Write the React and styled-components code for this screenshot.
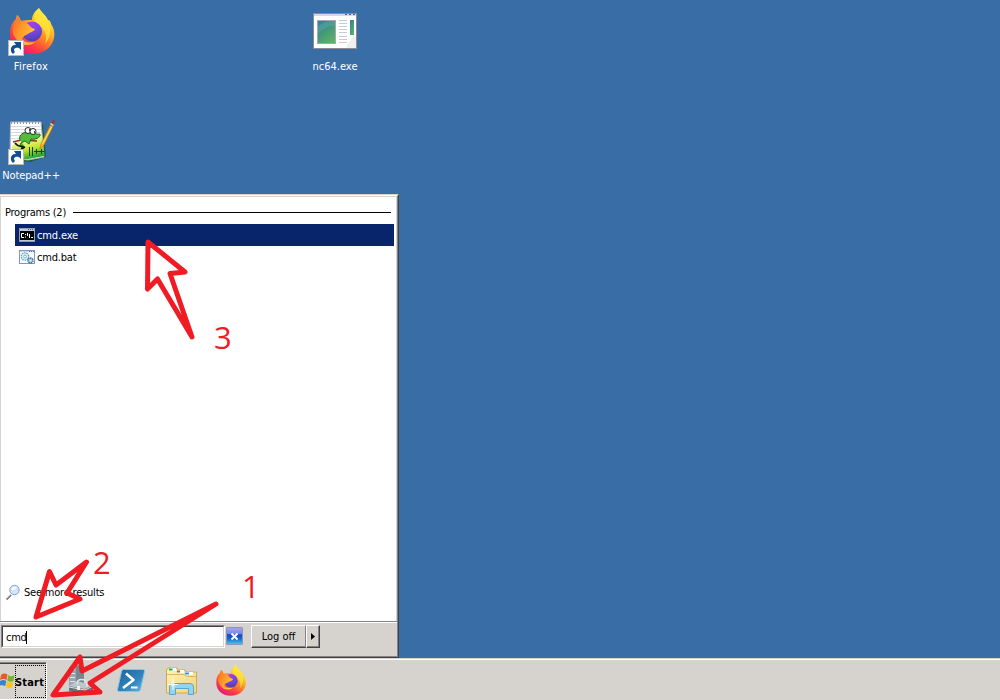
import React from 'react';
import styled, { createGlobalStyle, css } from 'styled-components';

const Global = createGlobalStyle`
  * { box-sizing: border-box; }
  html, body { margin: 0; padding: 0; }
  body { overflow: hidden; font: 11px/14px "DejaVu Sans Condensed", "DejaVu Sans", sans-serif; color: #000; }
  svg { display: block; flex: none; }
`;

const face = '#d6d3ce';

const Desktop = styled.main`
  position: relative;
  width: 1000px;
  height: 700px;
  display: flex;
  flex-direction: column;
  background: #396da5;
  overflow: hidden;
`;

const IconArea = styled.section`
  height: 194px;
  flex: none;
  display: grid;
  grid-template-columns: 304px 62px;
  grid-template-rows: 109px 85px;
  padding-top: 8px;
`;

const Shortcut = styled.div`
  width: 62px;
  height: 68px;
  display: flex;
  flex-direction: column;
  align-items: center;
  gap: 2px;
  color: #fff;
`;

const Label = styled.span`
  white-space: nowrap;
  font-stretch: condensed;
  font-weight: ${p => (p.$bold ? 700 : 400)};
  letter-spacing: ${p => p.$track || 0}px;
  line-height: 14px;
  padding-top: ${p => (p.$centered ? 0 : 2)}px;
`;

const Menu = styled.section`
  width: 399px;
  height: 464px;
  flex: none;
  display: flex;
  flex-direction: column;
  background: #fff;
  border-top: 1px solid ${face};
  border-right: 1px solid #424142;
  border-bottom: 1px solid #424142;
`;

const MenuFrame = styled.div`
  flex: 1;
  display: flex;
  flex-direction: column;
  border-top: 1px solid #fff;
  border-right: 1px solid #848284;
  border-bottom: 1px solid #848284;
`;

const Results = styled.div`
  height: 425px;
  display: flex;
  flex-direction: column;
  border: 1px solid ${face};
  border-bottom: 0;
  padding-right: 2px;
`;

const GroupHeader = styled.div`
  display: flex;
  align-items: center;
  height: 27px;
  padding: 3px 3px 0 4px;
  gap: 7px;
`;

const Rule = styled.div`
  flex: 1;
  height: 1px;
  background: #000;
`;

const Row = styled.div`
  height: 22px;
  margin-left: 14px;
  padding-left: 4px;
  display: flex;
  align-items: center;
  gap: 2px;
  ${p => p.$selected && css`background: #08246b; color: #fff;`}
`;

const More = styled.div`
  margin-top: auto;
  margin-bottom: 20px;
  padding-left: 4px;
  height: 18px;
  display: flex;
  align-items: center;
  gap: 3px;
`;

const SearchBar = styled.div`
  flex: 1;
  display: flex;
  align-items: flex-start;
  background: ${face};
  border-top: 1px solid #848284;
  box-shadow: inset 0 1px #fff;
  padding: 3px 0 0 1px;
`;

const SearchField = styled.div`
  width: 224px;
  height: 23px;
  border: 1px solid;
  border-color: #848284 #fff #fff #848284;
`;

const FieldText = styled.div`
  height: 21px;
  padding: 2px 0 0 3px;
  display: flex;
  align-items: flex-start;
  background: #fff;
  border: 1px solid;
  border-color: #424142 ${face} ${face} #424142;
`;

const Caret = styled.i`
  width: 1px;
  height: 13px;
  margin-top: 2px;
  background: #000;
`;

const ClearButton = styled.div`
  margin: 2px 0 0 1px;
  width: 17px;
  height: 18px;
  display: grid;
  place-items: center;
  border: 1px solid #8c96b5;
  border-radius: 1px;
  background: linear-gradient(#a5a6ef 0, #7b86e7 35%, #1049c6 42%, #1865ce 65%, #42c7e7 100%);
`;

const raised = css`
  border: 1px solid;
  border-color: #fff #424142 #424142 #fff;
  box-shadow: inset -1px -1px #848284;
  background: ${face};
`;

const LogOff = styled.div`
  margin-left: 8px;
  height: 23px;
  display: flex;
`;

const PushButton = styled.div`
  ${raised}
  width: ${p => p.$w}px;
  display: grid;
  place-items: center;
  ${p => p.$split && css`border-right-color: #848284; box-shadow: inset 0 -1px #848284;`}
`;

const Taskbar = styled.footer`
  height: 42px;
  flex: none;
  display: flex;
  background: ${face};
  border-top: 1px solid ${face};
  box-shadow: inset 0 1px #fff;
  padding-top: 3px;
`;

const StartButton = styled.div`
  width: 47px;
  height: 38px;
  display: flex;
  align-items: center;
  border-top: 1px solid #848284;
  border-right: 1px solid #fff;
  border-bottom: 1px solid #fff;
  box-shadow: inset 0 1px #424142, inset -1px 0 ${face};
`;

const Focus = styled.div`
  width: 31px;
  height: 33px;
  margin-top: 1px;
  display: flex;
  align-items: center;
  padding-right: 2px;
  justify-content: center;
  border: 1px dotted #000;
`;

const QuickLaunch = styled.nav`
  display: flex;
  align-items: flex-start;
  gap: 18px;
  padding: 3px 0 0 18px;
`;

const Annotations = styled.svg`
  position: absolute;
  left: 0;
  top: 0;
`;

function Firefox({ size, id }) {
  return (
    <svg width={size} height={size} viewBox="0 0 48 48">
      <defs>
        <linearGradient id={`${id}a`} x1=".85" y1=".1" x2=".3" y2=".95">
          <stop offset="0" stopColor="#fff44f" /><stop offset=".25" stopColor="#ffca2e" />
          <stop offset=".5" stopColor="#ff8a25" /><stop offset=".78" stopColor="#ff3f42" /><stop offset="1" stopColor="#ea1d78" />
        </linearGradient>
        <radialGradient id={`${id}b`} cx=".45" cy=".1" r=".9">
          <stop offset="0" stopColor="#a53df0" /><stop offset=".5" stopColor="#7a45e5" /><stop offset="1" stopColor="#4742ae" />
        </radialGradient>
        <linearGradient id={`${id}c`} x1="0" y1="0" x2="1" y2=".6">
          <stop offset="0" stopColor="#ff6a20" /><stop offset=".6" stopColor="#ffa32c" /><stop offset="1" stopColor="#ffc53c" />
        </linearGradient>
      </defs>
      <path d="M31 0c2 4 7 7 9 12c2 0 3 3 3 4c3 4 4 9 3 14c-2 10-11 16-22 16C10 46 1 37 2 25c0-6 2-10 6-14c0-1 0-2 1-4c2 1 3 3 4 6c3-1 7-1 11-1c0-5 3-9 7-12Z" fill={`url(#${id}a)`} />
      <path d="M31 0c1 5 7 8 9 14c4 8 2 16-3 22c3-8 0-14-5-18c-6-3-9-9-1-18Z" fill="#ffe83d" opacity=".7" />
      <circle cx="24" cy="23.500" r="10" fill={`url(#${id}b)`} />
      <path d="M5 20c1-4 4-6 4-12c2 1 3 4 5 7c3-1 6 0 8 3c1 2 3 2 5 3c-1 3-5 3-7 5c-2 1-5 2-6 4c1 5 8 5 13 4c-4 4-13 4-17-1c-4-4-6-8-5-13Z" fill={`url(#${id}c)`} />
    </svg>
  );
}

function LinkBadge() {
  return (
    <g>
      <rect x="1.500" y="32.500" width="15" height="15" fill="#fff" stroke="#bdb6ad" />
      <path d="M6 46c-4-4-2-10 3-9l-2-3h7v8l-2-2c-5-1-6 2-4 4Z" fill="#104d94" />
    </g>
  );
}

function FirefoxShortcut() {
  return (
    <svg width="48" height="48" viewBox="0 0 48 48">
      <g transform="translate(1 0)"><Firefox size={48} id="fd" /></g>
      <LinkBadge />
    </svg>
  );
}

function NotepadIcon() {
  return (
    <svg width="48" height="48" viewBox="0 0 48 48">
      <defs>
        <linearGradient id="pad" x1=".2" y1="0" x2=".6" y2="1">
          <stop offset="0" stopColor="#fbffe8" /><stop offset=".3" stopColor="#e6f58a" /><stop offset=".6" stopColor="#c7e331" /><stop offset="1" stopColor="#18a231" />
        </linearGradient>
      </defs>
      <path d="M4 8L36 7L39 40L23 45L4 43Z" fill="#1d5d3d" />
      <path d="M3.500 5H34L37 40L21 43L3 41Z" fill="#fff" stroke="#adb2bd" />
      <path d="M4 9.500H34M4 12.500H34M4 15.500H34M4 18.500H34M4 21.500H34" stroke="#d4dbe0" />
      <path d="M5 29L15 21L35 19L37 39L21 42H5Z" fill="url(#pad)" />
      <path d="M4.500 4v3M7.500 4v3M10.500 4v3M13.500 4v3M16.500 4v3M19.500 4v3M22.500 4v3M25.500 4v3M28.500 4v3M31.500 4v3" stroke="#8b949f" />
      <path d="M6 25L14 23L30 24" stroke="#943021" strokeWidth="1.500" fill="none" />
      <path d="M13 23c-2-5 4-9 9-7c4-2 6 2 11 1c1 4-6 6-9 5l-2 5l-4-3l-4 2c-2 3 1 7 4 4" fill="#52bd3b" stroke="#216521" />
      <ellipse cx="21" cy="13.500" rx="3" ry="3" fill="#fff" stroke="#222" />
      <ellipse cx="26" cy="14.500" rx="3" ry="3" fill="#fff" stroke="#222" />
      <path d="M22 13h1M27 15h1M8 26c4 5 6 2 9 4M14 32l4-2" stroke="#111" strokeWidth="1.500" fill="none" />
      <path d="M22.500 30v9M25.500 30v9M27 34.500h5M29.500 32v5M32 34.500h5M34.500 32v5" stroke="#184518" />
      <path d="M34 27L43.500 8L46 9.500L37 28L33 32Z" fill="#ffb618" stroke="#b57910" strokeWidth=".6" />
      <path d="M35.500 27L44.500 10" stroke="#ffe781" />
      <path d="M44 6L45.500 3Q47 2 48 4L46.500 7.500Z" fill="#a53a29" />
      <path d="M43.500 6.500L46.500 8.500" stroke="#dedfe7" strokeWidth="1.500" />
      <LinkBadge />
    </svg>
  );
}

function AppIcon() {
  return (
    <svg width="48" height="48" viewBox="0 0 48 48">
      <defs>
        <linearGradient id="app" x1="0" y1="0" x2=".6" y2="1"><stop offset="0" stopColor="#317da5" /><stop offset=".5" stopColor="#42967b" /><stop offset="1" stopColor="#5ab263" /></linearGradient>
      </defs>
      <rect x="2.500" y="5.500" width="43" height="35" fill="#fff" stroke="#8c8a94" />
      <path d="M3 7H45" stroke="#d6d7ef" strokeWidth="2" />
      <path d="M34 6.500h2M38 6.500h2M42 6.500h2" stroke="#4a5d9c" />
      <rect x="6.500" y="12.500" width="18" height="23" fill="url(#app)" stroke="#a5a6bd" />
      <path d="M7 18c5-4 11-5 17-5v5C17 17 12 21 7 26Z" fill="#75b6b7" opacity=".3" />
      <path d="M28 12.500h8M28 15.500h8M28 18.500h8M28 21.500h8M28 24.500h8M28 28.500h8M28 31.500h8M28 34.500h8" stroke="#c6cbce" />
      <rect x="39" y="12" width="4" height="15" fill="url(#app)" />
      <path d="M36 37l6-8h3v11h-9Z" fill="#f0eff0" />
    </svg>
  );
}

function CmdIcon() {
  return (
    <svg width="16" height="16" viewBox="0 0 16 16">
      <rect x=".5" y="1.500" width="15" height="13" fill="#c6c7ce" stroke="#949ead" />
      <path d="M9 2.500h1M11 2.500h1M13 2.500h1" stroke="#4a5984" />
      <rect x="1" y="4" width="14" height="9" fill="#000" />
      <path d="M5 6.500h-2.500v4h2.500M6.500 7v1M6.500 9.500v1M8.500 6v3M10.500 7v4M12 10.500h2" fill="none" stroke="#fff" />
    </svg>
  );
}

function BatIcon() {
  return (
    <svg width="16" height="16" viewBox="0 0 16 16">
      <rect x=".5" y="1.500" width="15" height="13" fill="#f7fbff" stroke="#8496b5" />
      <path d="M1 2.500H15" stroke="#c9d8ea" /><path d="M10 2.500h1M12 2.500h1M14 2.500h1" stroke="#4a69a5" />
      <circle cx="6" cy="7.500" r="3.700" fill="#dff2fb" stroke="#63a2ce" strokeWidth="1.300" strokeDasharray="1.500 .8" />
      <circle cx="6" cy="7.500" r="1.400" fill="#fff" stroke="#5695c4" strokeWidth=".7" />
      <circle cx="11.500" cy="11.500" r="2.500" fill="#a5c7e7" stroke="#3169a5" strokeWidth="1.300" strokeDasharray="1.500 .7" />
      <circle cx="11.500" cy="11.500" r=".8" fill="#fff" />
    </svg>
  );
}

function Magnifier() {
  return (
    <svg width="16" height="17" viewBox="0 0 16 17">
      <path d="M1.500 15.500L6 11" stroke="#7b7d84" strokeWidth="1.800" />
      <path d="M1.500 14.500L5 11" stroke="#c6c7c6" strokeWidth=".8" />
      <circle cx="9.500" cy="6" r="4.700" fill="#cee7ff" stroke="#8c9ec6" />
      <path d="M6.500 6c0-3 3-4 5-3c-1 3-3 3-5 3Z" fill="#fff" />
    </svg>
  );
}

function WindowsFlag() {
  return (
    <svg width="15" height="16" viewBox="0 0 15 16">
      <path d="M1 2C3 0 5 0 7.500 1.500L6.500 7C4 5.500 2 6 0 7Z" fill="#e95a24" />
      <path d="M8.300 2C10 3.500 12 3.500 14.500 2L13.500 8C11 9 9 9 7.300 7.500Z" fill="#79b52d" />
      <path d="M0 8C2 7 4 6.500 6.300 8L5.300 13C3 12 1.500 12 0 12.500Z" fill="#3d80cb" />
      <path d="M7.200 8.500C9 10 11 10 13.200 9L12 14C10 16 8 15.500 6.200 14Z" fill="#ffc20e" />
    </svg>
  );
}

function ServerIcon() {
  return (
    <svg width="32" height="32" viewBox="0 0 32 32">
      <path d="M4 2L11 0L19 2V24L11 27L4 24Z" fill="#9ba6ac" />
      <path d="M11 0L19 2V24L11 26Z" fill="#78868e" />
      <path d="M5 4.500H10M5 8.500H10M5 12.500H10M5 16.500H10M5 20.500H10" stroke="#e1e8eb" />
      <path d="M4 22L12 17L28 21V27L20 30L4 26Z" fill="#66747e" />
      <path d="M4 21L12 16L28 20L20 24Z" fill="#bdc8cd" />
      <path d="M12 19c0-6 9-6 10 0v3" fill="none" stroke="#e0e6e9" strokeWidth="1.500" />
      <path d="M4 22L20 25V30M20 25L28 21" stroke="#dce2e5" fill="none" />
      <path d="M12 21h3v4h-3Z" fill="#eef0f1" />
    </svg>
  );
}

function PowerShell() {
  return (
    <svg width="32" height="32" viewBox="0 0 32 32">
      <defs><linearGradient id="ps" x1="0" y1="0" x2="1" y2="1"><stop stopColor="#1f6199" /><stop offset=".6" stopColor="#3186bd" /><stop offset="1" stopColor="#6bbae0" /></linearGradient></defs>
      <path d="M8.500 4.500H28Q30 4.500 29.500 6.500L25.500 24.500Q25 26.500 23 26.500H4Q2 26.500 2.500 24.500L6.500 6.500Q7 4.500 8.500 4.500Z" fill="url(#ps)" stroke="#8cc3e2" />
      <path d="M11 8.500L18.500 15L8 23" fill="none" stroke="#fff" strokeWidth="2.500" strokeLinejoin="round" />
      <path d="M16 22.500H22.500" stroke="#fff" strokeWidth="2" />
    </svg>
  );
}

function Explorer() {
  return (
    <svg width="32" height="32" viewBox="0 0 32 32">
      <defs><linearGradient id="fo" x1="0" y1="0" x2="1" y2="1"><stop stopColor="#fff3b5" /><stop offset="1" stopColor="#efd57b" /></linearGradient></defs>
      <path d="M1.500 28V5L3 3H12L13 5H20L21 7H31.500V28Z" fill="url(#fo)" stroke="#cfaa52" />
      <path d="M4 4.500H11M12 6.500H19M20 8.500H28" stroke="#fff" strokeWidth="3" />
      <path d="M4 4.500H7.500" stroke="#18b529" strokeWidth="2" /><path d="M12 6.500H15" stroke="#ce5139" strokeWidth="2" /><path d="M20 8.500H24" stroke="#299ae7" strokeWidth="2" />
      <path d="M2 9.500H19L22 11.500H31" fill="none" stroke="#d8b863" />
      <path d="M4.500 29.500V22Q4.500 18.500 8 18.500H25Q28.500 18.500 28.500 22V29.500H23.500V23.500H10.500V29.500Z" fill="#94d3ec" stroke="#5aa6cc" />
      <path d="M8 14V25M3 19.500H13M6 17.500L10 21.500M10 17.500L6 21.500" stroke="#fff" />
    </svg>
  );
}

export default function App() {
  return (
    <Desktop>
      <Global />
      <IconArea>
        <Shortcut><FirefoxShortcut /><Label $track={0.25}>Firefox</Label></Shortcut>
        <Shortcut><AppIcon /><Label>nc64.exe</Label></Shortcut>
        <Shortcut><NotepadIcon /><Label $track={-0.1}>Notepad++</Label></Shortcut>
      </IconArea>
      <Menu>
        <MenuFrame>
          <Results>
            <GroupHeader><Label $track={-0.25}>Programs (2)</Label><Rule /></GroupHeader>
            <Row $selected><CmdIcon /><Label $track={-0.15}>cmd.exe</Label></Row>
            <Row><BatIcon /><Label $track={-0.2}>cmd.bat</Label></Row>
            <More><Magnifier /><Label $track={-0.2}>See more results</Label></More>
          </Results>
          <SearchBar>
            <SearchField><FieldText><Label $track={-0.3}>cmd</Label><Caret /></FieldText></SearchField>
            <ClearButton>
              <svg width="9" height="9" viewBox="0 0 9 9"><path d="M1.500 1.500L7.500 7.500M7.500 1.500L1.500 7.500" stroke="#fff" strokeWidth="1.900" /></svg>
            </ClearButton>
            <LogOff>
              <PushButton $w={55} $split><Label $centered>Log off</Label></PushButton>
              <PushButton $w={14}><svg width="4" height="7" viewBox="0 0 4 7"><path d="M0 0L4 3.500L0 7Z" /></svg></PushButton>
            </LogOff>
          </SearchBar>
        </MenuFrame>
      </Menu>
      <Taskbar>
        <StartButton><WindowsFlag /><Focus><Label $bold $track={0.2}>Start</Label></Focus></StartButton>
        <QuickLaunch><ServerIcon /><PowerShell /><Explorer /><Firefox size={32} id="ft" /></QuickLaunch>
      </Taskbar>
      <Annotations width="1000" height="700" viewBox="0 0 1000 700">
        <g fill="none" stroke="#ef1c24" strokeWidth="5" strokeLinejoin="round" strokeLinecap="round">
          <path d="M148 242L185 272L170 273.500L192 337L157.500 279L147.500 289Z" />
          <path d="M86.500 562L56 585L49.500 571.500L36 617L80 599L67 593Z" />
          <path d="M216 604L82 671L80 657L53 695L100 692L90 683Z" />
        </g>
        <g fill="#ef1c24" fontFamily='"Open Sans", "Noto Sans", sans-serif' fontSize="31">
          <text x="214" y="349">3</text>
          <text x="93" y="574">2</text>
          <text x="242" y="598">1</text>
        </g>
      </Annotations>
    </Desktop>
  );
}
